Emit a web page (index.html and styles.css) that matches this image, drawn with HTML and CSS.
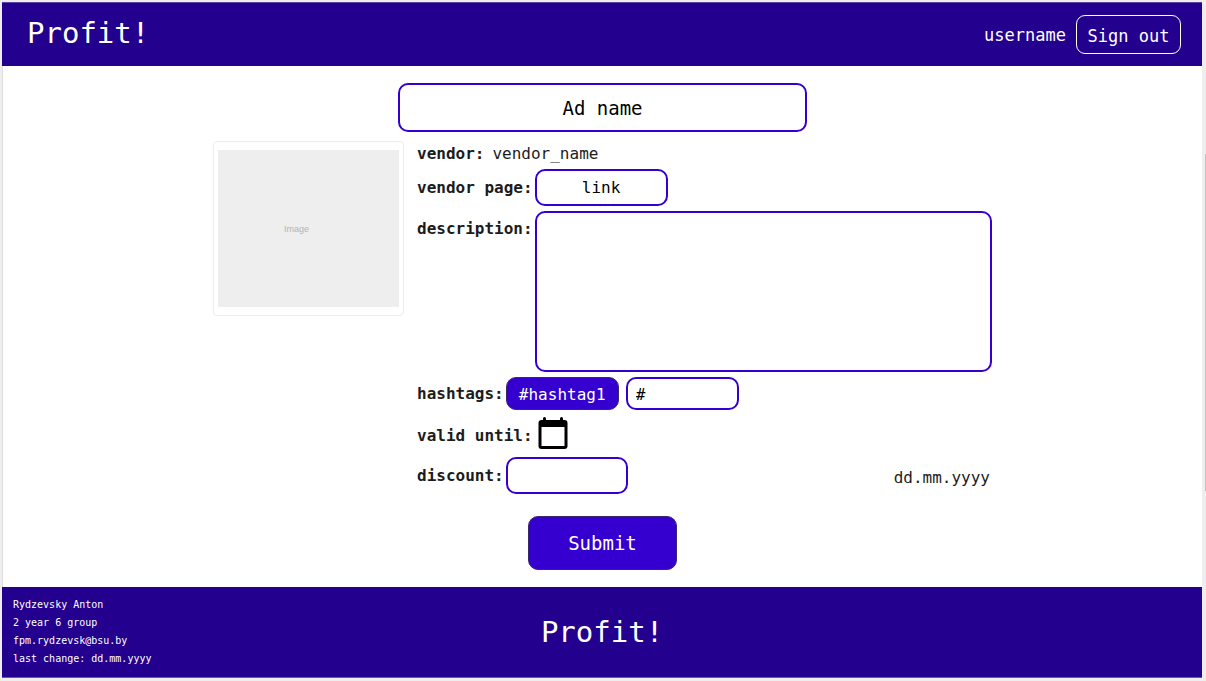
FILE: index.html
```html
<!DOCTYPE html>
<html lang="en">
<head>
  <meta charset="utf-8">
  <meta name="viewport" content="width=device-width, initial-scale=1">
  <title>Profit!</title>
  <link rel="stylesheet" href="styles.css">
</head>
<body>
  <div class="page">
    <header class="header">
      <a class="brand" href="#">Profit!</a>
      <div class="account">
        <span>username</span>
        <button class="sign-out" type="button">Sign out</button>
      </div>
    </header>

    <main class="main">
      <form class="ad-form">
        <input class="field title-field" type="text" aria-label="Ad name" value="Ad name">

        <div class="ad-body">
          <div class="image-card">
            <div class="image-placeholder">Image</div>
          </div>

          <div class="details">
            <div class="row vendor-row">
              <span class="label">vendor:</span>
              <span>vendor_name</span>
            </div>
            <div class="row">
              <label class="label" for="vendor-page">vendor page:</label>
              <input class="field link-field" id="vendor-page" type="text" value="link">
            </div>
            <div class="row description-row">
              <label class="label" for="description">description:</label>
              <textarea class="field description-field" id="description"></textarea>
            </div>
            <div class="row">
              <label class="label" for="hashtag">hashtags:</label>
              <div class="tags">
                <button class="tag" type="button">#hashtag1</button>
                <input class="field tag-field" id="hashtag" type="text" value="#">
              </div>
            </div>
            <div class="row">
              <span class="label valid-label">valid until:</span>
              <button class="calendar" type="button" aria-label="Choose date">
                <svg width="30" height="33" viewBox="0 0 30 33" aria-hidden="true">
                  <path fill-rule="evenodd" d="M5 1.500q0-1.500 1.500-1.500t1.500 1.500V3h14V1.500Q22 0 23.500 0T25 1.500V3h1.500Q29.500 3 29.500 6v23q0 3-3 3h-23q-3 0-3-3V6q0-3 3-3H5zM3.500 10v19h23V10z"/>
                </svg>
              </button>
            </div>
            <div class="row">
              <label class="label" for="discount">discount:</label>
              <input class="field discount-field" id="discount" type="text">
              <time class="date">dd.mm.yyyy</time>
            </div>
          </div>
        </div>

        <button class="submit" type="submit">Submit</button>
      </form>
    </main>

    <footer class="footer">
      <address class="credits">
        <div>Rydzevsky Anton</div>
        <div>2 year 6 group</div>
        <div>fpm.rydzevsk@bsu.by</div>
        <div>last change: dd.mm.yyyy</div>
      </address>
      <a class="brand" href="#">Profit!</a>
    </footer>
  </div>
  <div class="scroll-thumb"></div>
</body>
</html>
```

FILE: styles.css
```css
* {
  box-sizing: border-box;
}

body {
  margin: 0;
  background: #eeeeee;
  color: #1c1c1c;
  font: 16px/21px "DejaVu Sans Mono", monospace;
}

button,
input,
textarea {
  margin: 0;
  font: inherit;
}

button {
  padding: 0;
  cursor: pointer;
}

.page {
  display: flex;
  flex-direction: column;
  min-height: 100vh;
  padding: 2px 4px 3px 2px;
}

.header {
  display: flex;
  align-items: center;
  justify-content: space-between;
  height: 64px;
  padding: 0 21px 0 25px;
  border-top: 1px solid #5b42a6;
  background: #23008e;
  color: #ffffff;
}

.brand {
  color: #ffffff;
  font-size: 29px;
  line-height: 36px;
  text-decoration: none;
}

.header .brand {
  padding-bottom: 3px;
}

.account {
  display: flex;
  align-items: center;
  gap: 10px;
  font-size: 17px;
  line-height: 22px;
}

.sign-out {
  width: 105px;
  height: 39px;
  padding-top: 2px;
  border: 1px solid #ffffff;
  border-radius: 9px;
  background: transparent;
  color: #ffffff;
}

.main {
  flex: 1;
  padding: 17px 0;
  border-left: 1px solid #dedede;
  background: #ffffff;
}

.ad-form {
  display: flex;
  flex-direction: column;
  align-items: center;
}

.field {
  min-width: 0;
  border: 2px solid #3500cf;
  border-radius: 10px;
  background: #ffffff;
  color: #000000;
}

.title-field {
  width: 409px;
  height: 49px;
  font-size: 19px;
  text-align: center;
}

.ad-body {
  display: flex;
  align-items: flex-start;
  gap: 13px;
  width: 779px;
  max-width: 100%;
  margin: 9px 0 22px;
}

.image-card {
  width: 191px;
  padding: 8px 4px;
  border: 1px solid #ececec;
  border-radius: 4px;
}

.image-placeholder {
  display: flex;
  align-items: center;
  justify-content: center;
  height: 157px;
  padding-right: 24px;
  background: #eeeeee;
  color: #b4b4b4;
  font: 9px/12px "Liberation Sans", sans-serif;
}

.details {
  display: flex;
  flex: 1;
  flex-direction: column;
  gap: 5px;
  padding-top: 2px;
}

.row {
  display: flex;
  align-items: center;
  gap: 2px;
}

.vendor-row {
  gap: 8px;
}

.label {
  font-weight: bold;
}

.link-field,
.discount-field {
  height: 37px;
}

.link-field {
  width: 133px;
  text-align: center;
}

.description-row {
  align-items: flex-start;
}

.description-row .label {
  padding-top: 7px;
}

.description-field {
  flex: 1;
  height: 161px;
  padding: 8px;
  resize: none;
}

.tags {
  display: flex;
  gap: 7px;
}

.tag,
.tag-field {
  width: 113px;
  height: 33px;
  padding-top: 2px;
}

.tag {
  border: 1px solid #39286f;
  border-radius: 10px;
  background: #3500cf;
  color: #ffffff;
}

.tag-field {
  padding-left: 8px;
}

.valid-label {
  padding-top: 4px;
}

.calendar {
  display: flex;
  align-items: center;
  height: 37px;
  margin-left: 3px;
  border: 0;
  background: none;
}

.discount-field {
  width: 122px;
  padding: 0 8px;
}

.date {
  margin-left: auto;
  padding: 4px 2px 0 0;
}

.submit {
  width: 149px;
  height: 54px;
  border: 1px solid #39286f;
  border-radius: 10px;
  background: #3500cf;
  color: #ffffff;
  font-size: 19px;
}

.footer {
  display: grid;
  grid-template-columns: 1fr auto 1fr;
  align-items: center;
  height: 91px;
  padding: 0 11px;
  border-bottom: 1px solid #6a55ad;
  background: #23008e;
  color: #ffffff;
}

.credits {
  font-size: 10px;
  font-style: normal;
  line-height: 18px;
}

.scroll-thumb {
  position: absolute;
  top: 154px;
  right: 0;
  width: 1px;
  height: 337px;
  background: #c1c1c1;
}
```
